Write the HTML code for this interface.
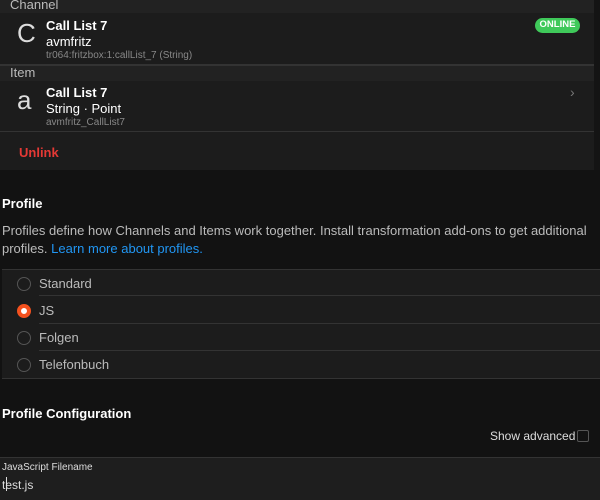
<!DOCTYPE html>
<html><head><style>
*{margin:0;padding:0;box-sizing:border-box}
body{width:600px;height:500px;background:#121212;font-family:"Liberation Sans",sans-serif;color:#fff;position:relative;overflow:hidden}
.abs{position:absolute}
.hdr{background:#222;color:#bbb;font-size:13px;padding-left:10px}
.t{font-weight:bold;font-size:13px}
.s{font-size:13px}
.m{font-size:10px;color:#888}
.radio{position:absolute;left:15px;width:14px;height:14px;border:1.5px solid #555;border-radius:50%}
.rl{position:absolute;left:37px;font-size:13px;color:#bbb}
.ln{position:absolute;left:37px;right:0;height:1px;background:#333}
</style></head><body>
<div class="abs" style="left:0;top:0;width:594px;height:170px;background:#1c1c1c"></div>
<div class="abs" style="left:594px;top:0;width:6px;height:170px;background:#141414"></div>
<div class="abs hdr" style="left:0;top:0;width:594px;height:13px;line-height:9px">Channel</div>
<div class="abs" style="left:17px;top:18px;font-size:26px;color:#ddd;font-weight:300">C</div>
<div class="abs t" style="left:46px;top:18px">Call List 7</div>
<div class="abs s" style="left:46px;top:34px">avmfritz</div>
<div class="abs m" style="left:46px;top:50px">tr064:fritzbox:1:callList_7 (String)</div>
<div class="abs" style="left:535px;top:18px;width:45px;height:15px;background:#3fc95a;border-radius:8px;font-size:9.5px;font-weight:bold;text-align:center;line-height:14px;color:#fff">ONLINE</div>
<div class="abs" style="left:0;top:64px;width:594px;height:2px;background:#333"></div>
<div class="abs hdr" style="left:0;top:66px;width:594px;height:15px;line-height:13px">Item</div>
<div class="abs" style="left:17px;top:85px;font-size:26px;color:#ddd;font-weight:300">a</div>
<div class="abs t" style="left:46px;top:85px">Call List 7</div>
<div class="abs s" style="left:46px;top:101px">String · Point</div>
<div class="abs m" style="left:46px;top:117px">avmfritz_CallList7</div>
<div class="abs" style="left:570px;top:84px;color:#777;font-size:14px">›</div>
<div class="abs" style="left:0;top:131px;width:594px;height:1px;background:#333"></div>
<div class="abs" style="left:19px;top:145px;color:#e53935;font-weight:bold;font-size:13px">Unlink</div>
<div class="abs t" style="left:2px;top:196px">Profile</div>
<div class="abs" style="left:2px;top:222px;font-size:13px;color:#bbb;line-height:18px;width:590px">Profiles define how Channels and Items work together. Install transformation add-ons to get additional profiles. <span style="color:#2196f3">Learn more about profiles.</span></div>
<div class="abs" style="left:2px;top:269px;width:598px;height:110px;background:#1c1c1c;border-top:1px solid #333;border-bottom:1px solid #333">
<div class="radio" style="top:7px"></div><div class="rl" style="top:6px">Standard</div><div class="ln" style="top:25px"></div>
<div class="radio" style="top:34px;border:4px solid #f4511e;background:#fff"></div><div class="rl" style="top:33px">JS</div><div class="ln" style="top:53px"></div>
<div class="radio" style="top:61px"></div><div class="rl" style="top:60px">Folgen</div><div class="ln" style="top:80px"></div>
<div class="radio" style="top:88px"></div><div class="rl" style="top:87px">Telefonbuch</div>
</div>
<div class="abs t" style="left:2px;top:406px">Profile Configuration</div>
<div class="abs" style="left:490px;top:429px;font-size:12px;color:#ddd">Show advanced</div>
<div class="abs" style="left:577px;top:430px;width:12px;height:12px;border:1.5px solid #555;border-radius:2px"></div>
<div class="abs" style="left:0;top:457px;width:600px;height:43px;background:#1e1e1e;border-top:1px solid #333"></div>
<div class="abs" style="left:2px;top:462px;font-size:10px;color:#ddd">JavaScript Filename</div>
<div class="abs" style="left:2px;top:478px;font-size:12px;color:#ddd">test.js</div>
<div class="abs" style="left:6px;top:477px;width:1px;height:14px;background:#ddd"></div>
</body></html>
